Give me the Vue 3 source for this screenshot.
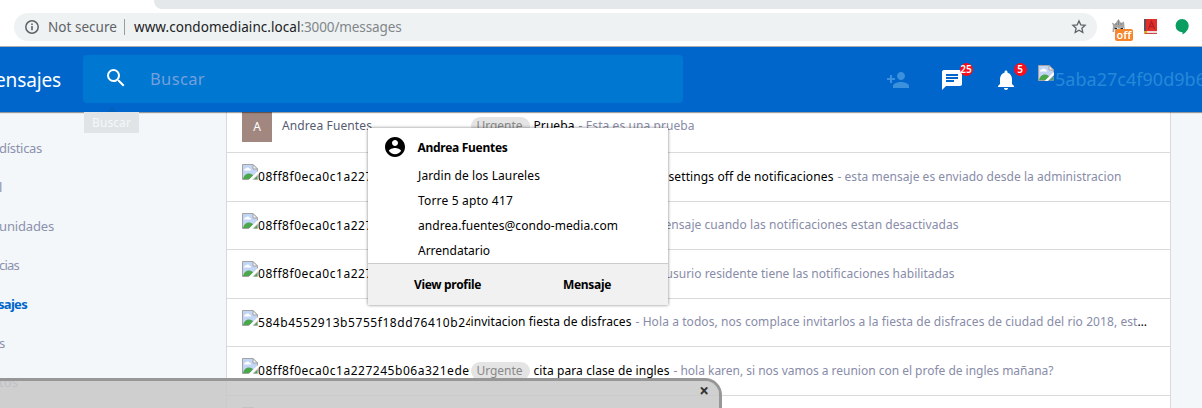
<script setup>
const messages = [
  { initial: 'A', name: 'Andrea Fuentes', urgent: true, subject: 'Prueba', sw: 41, text: '- Esta es una prueba', tw: 116 },
  { alt: '08ff8f0eca0c1a227245b06a321ede9', aw: 219, indent: 198, subject: 'settings off de notificaciones', sw: 165, text: '- esta mensaje es enviado desde la administracion', tw: 284 },
  { alt: '08ff8f0eca0c1a227245b06a321ede9', aw: 219, indent: 194, text: 'ensaje cuando las notificaciones estan desactivadas', tw: 294 },
  { alt: '08ff8f0eca0c1a227245b06a321ede9', aw: 219, indent: 195, text: 'usurio residente tiene las notificaciones habilitadas', tw: 289 },
  { alt: '584b4552913b5755f18dd76410b24', aw: 215, subject: 'invitacion fiesta de disfraces', sw: 161, text: '- Hola a todos, nos complace invitarlos a la fiesta de disfraces de ciudad del rio 2018, est', tw: 502, more: true },
  { alt: '08ff8f0eca0c1a227245b06a321ede9', aw: 219, urgent: true, subject: 'cita para clase de ingles', sw: 136, text: '- hola karen, si nos vamos a reunion con el profe de ingles mañana?', tw: 380 },
  { alt: '08ff8f0eca0c1a227245b06a321ede9', aw: 219, subject: '', text: '' },
]

const menu = [
  { label: 'dísticas', w: 43 },
  { label: 'l', w: 3 },
  { label: 'unidades', w: 55 },
  { label: 'cias', w: 20 },
  { label: 'sajes', w: 29, active: true },
  { label: 's', w: 6 },
  { label: 'tos', w: 19 },
]

const details = [
  { label: 'Jardin de los Laureles', w: 122 },
  { label: 'Torre 5 apto 417', w: 95 },
  { label: 'andrea.fuentes@condo-media.com', w: 200 },
  { label: 'Arrendatario', w: 72 },
]

// Tracks the text in or out so that it fills the given width.
const vFit = {
  mounted(el, { value }) {
    if (!value) return
    const natural = el.getBoundingClientRect().width
    el.style.letterSpacing = (value - natural) / el.textContent.length + 'px'
  },
}
</script>

<template>
  <div class="screen">
    <svg class="defs" width="0" height="0">
      <symbol id="broken" viewBox="0 0 16 16">
        <path d="M.5.5h10.500l4.500 4.500v5L10 15.500H.5z" fill="#c2d5f5" stroke="#a3a3a3" />
        <path d="M2 6.500c0-1.500 1-2 2-2 .5-1.500 3-1.500 3.300 0 1.200 0 1.700.8 1.700 2z" fill="#fff" />
        <path d="M1 15c1-4 3.500-5.500 6-5.500s3.500 1 4 2L8 15z" fill="#4ca64c" />
        <path d="M11 .5V5h4.500z" fill="#f5f5f5" stroke="#a3a3a3" />
        <path class="tear" d="M16 7v3L10 16H6.500z" />
        <path d="M15.500 11.500v4H11.500z" fill="#4ca64c" stroke="#a3a3a3" stroke-width=".6" />
      </symbol>
    </svg>

    <div class="browser">
      <div class="tabs"></div>
      <div class="toolbar">
        <div class="omnibox">
          <svg class="info" width="16" height="16" viewBox="0 0 16 16"><circle cx="8" cy="8" r="6.200" fill="none" stroke="#5f6368" stroke-width="1.500" /><path d="M7.200 7h1.600v4.200H7.200zM7.200 4.500h1.600V6H7.200z" fill="#5f6368" /></svg>
          <span class="secure"><span v-fit="69">Not secure</span></span>
          <span class="divider"></span>
          <span class="host" v-fit="166.5">www.condomediainc.local</span><span class="path" v-fit="101">:3000/messages</span>
          <svg class="star" width="16" height="16" viewBox="0 0 16 16"><path d="M8 1.900l1.800 4 4.300.4-3.200 2.900.9 4.300L8 11.300l-3.800 2.200.9-4.300-3.200-2.900 4.300-.4z" fill="none" stroke="#5f6368" stroke-width="1.300" /></svg>
        </div>
        <div class="ext cat">
          <svg width="16" height="14" viewBox="0 0 16 14"><path d="M1.500 13L2 6.500.8 3.500 4 5 7.500 0l2.500 4L13 2.500l.5 4.500.5 6z" fill="#a5a5a5" /><path d="M3 13V9l3-1 2 2 2-2 3 1v4z" fill="#e8e8e8" /><path d="M3.500 9.500h2.500M9.500 9.500H12" stroke="#222" stroke-width="1.500" /><path d="M7.500 1v5M5 4v2M10 4v2" stroke="#777" stroke-width=".7" /></svg>
          <span class="off">off</span>
        </div>
        <svg class="ext book" width="15" height="17" viewBox="0 0 15 17"><path d="M1 1h13v12H1z" fill="#df302c" /><path d="M1 1h2v15H1z" fill="#634e57" /><path d="M2 13h12v3H2z" fill="#f0ddd9" /><path d="M1 13h3v3H1z" fill="#e7a72d" /><path d="M2 15.500h12" stroke="#c94a42" /><path d="M5.500 11L8.500 3.500l3 7.500M6.500 8.500h4" fill="none" stroke="#b51f22" stroke-width="1.300" /></svg>
        <svg class="ext chat" width="14" height="16" viewBox="0 0 14 16"><path d="M7 0a6.600 6.600 0 0 1 6.700 6.700c0 3.700-3 7-6.200 8.800v-2.200A6.600 6.600 0 1 1 7 0z" fill="#0a9d60" /></svg>
      </div>
    </div>

    <header class="appbar">
      <div class="title"><span v-fit="66">ensajes</span></div>
      <div class="search">
        <svg width="24" height="24" viewBox="0 0 24 24"><path fill="#fff" d="M15.500 14h-.79l-.28-.27A6.471 6.471 0 0 0 16 9.500 6.500 6.500 0 1 0 9.500 16c1.610 0 3.090-.59 4.230-1.570l.27.28v.79l5 4.990L20.490 19l-4.990-5zm-6 0C7.010 14 5 11.990 5 9.500S7.010 5 9.500 5 14 7.010 14 9.500 11.990 14 9.500 14z" /></svg>
        <span class="placeholder"><span v-fit="55">Buscar</span></span>
      </div>
      <nav class="actions">
        <svg class="faded" width="24" height="24" viewBox="0 0 24 24"><path d="M15 12c2.210 0 4-1.790 4-4s-1.790-4-4-4-4 1.790-4 4 1.790 4 4 4zm-9-2V7H4v3H1v2h3v3h2v-3h3v-2H6zm9 4c-2.670 0-8 1.340-8 4v2h16v-2c0-2.660-5.330-4-8-4z" /></svg>
        <div class="action">
          <svg width="24" height="24" viewBox="0 0 24 24"><path d="M20 2H4c-1.100 0-1.990.9-1.990 2L2 22l4-4h14c1.100 0 2-.9 2-2V4c0-1.100-.9-2-2-2zM6 9h12v2H6V9zm8 5H6v-2h8v2zm4-6H6V6h12v2z" /></svg>
          <b class="badge">25</b>
        </div>
        <div class="action">
          <svg width="24" height="24" viewBox="0 0 24 24"><path d="M12 22c1.100 0 2-.9 2-2h-4c0 1.100.89 2 2 2zm6-6v-5c0-3.070-1.640-5.640-4.500-6.320V4c0-.83-.67-1.500-1.500-1.500s-1.500.67-1.500 1.500v.68C7.630 5.360 6 7.920 6 11v5l-2 2v1h16v-1l-2-2z" /></svg>
          <b class="badge">5</b>
        </div>
      </nav>
      <div class="user">
        <svg class="broken" width="16" height="16"><use href="#broken" /></svg>
        <span v-fit="151">5aba27c4f90d9b6</span>
      </div>
      <div class="tip"><span v-fit="39">Buscar</span></div>
    </header>

    <main class="body">
      <aside class="menu">
        <div v-for="m in menu" :key="m.label" class="item" :class="{ active: m.active }"><span v-fit="m.w">{{ m.label }}</span></div>
      </aside>
      <section class="inbox">
        <div v-for="(m, i) in messages" :key="i" class="row" :class="{ first: m.initial }">
          <div class="sender">
            <template v-if="m.initial">
              <span class="avatar">{{ m.initial }}</span>
              <span class="name" v-fit="90">{{ m.name }}</span>
            </template>
            <template v-else>
              <svg class="broken" width="16" height="16"><use href="#broken" /></svg>
              <span class="alt" v-fit="m.aw">{{ m.alt }}</span>
            </template>
          </div>
          <div class="summary" :style="{ paddingLeft: (m.indent || 0) + 'px' }">
            <span v-if="m.urgent" class="chip"><span v-fit="46">Urgente</span></span>
            <span v-if="m.subject" class="subject" v-fit="m.sw">{{ m.subject }}</span>
            <span v-if="m.text" v-fit="m.tw" class="excerpt">{{ m.text }}</span>
            <span v-if="m.more" class="more">…</span>
          </div>
        </div>
      </section>
    </main>

    <div class="card">
      <div class="who">
        <svg width="24" height="24" viewBox="0 0 24 24"><path d="M12 2C6.480 2 2 6.480 2 12s4.480 10 10 10 10-4.480 10-10S17.520 2 12 2zm0 3c1.660 0 3 1.340 3 3s-1.340 3-3 3-3-1.340-3-3 1.340-3 3-3zm0 14.200c-2.500 0-4.710-1.280-6-3.220.03-1.990 4-3.080 6-3.080 1.990 0 5.970 1.090 6 3.080-1.290 1.940-3.500 3.220-6 3.220z" /></svg>
        <b v-fit="90">Andrea Fuentes</b>
      </div>
      <div v-for="d in details" :key="d.label" class="detail"><span v-fit="d.w">{{ d.label }}</span></div>
      <div class="buttons">
        <b class="view" v-fit="67">View profile</b>
        <b v-fit="48">Mensaje</b>
      </div>
    </div>

    <div class="drawer"><b class="close">×</b></div>
  </div>
</template>

<style>
body { margin: 0; overflow: hidden; }
</style>

<style scoped>
.screen { position: relative; width: 1202px; height: 408px; overflow: hidden; display: flex; flex-direction: column; background: #f3f7fa; font: 12px/18px "Noto Sans", sans-serif; color: #000; }
span, b { white-space: pre; }
b { font-weight: 700; }
svg { flex: none; display: block; }
.defs { position: absolute; }
.tear { fill: #fff; }
.user .tear { fill: #06c; }

.browser { height: 46px; flex: none; background: #fff; border-bottom: 1px solid #adadad; }
.tabs { height: 9px; margin-left: 154px; background: #e4e8ea; border-bottom-left-radius: 8px; }
.toolbar { display: flex; align-items: flex-start; padding: 4px 0 0 14px; }
.omnibox { width: 1083px; height: 28px; flex: none; box-sizing: border-box; border-radius: 14px; background: #eef2f2; display: flex; align-items: center; padding: 0 10px; font-size: 13.5px; color: #5f6368; }
.secure { width: 76px; margin-left: 8px; }
.divider { width: 1px; height: 16px; background: #9a9da0; margin-right: 9px; }
.host { color: #202124; }
.path { color: #80868b; }
.star { margin-left: auto; }
.cat { position: relative; width: 20px; height: 28px; margin-left: 14px; padding-top: 6px; box-sizing: border-box; }
.off { position: absolute; left: 4px; top: 16px; width: 18px; height: 12px; border-radius: 2px; background: #f5862c; color: #fff; font: 600 11px/11px "Noto Sans", sans-serif; text-align: center; }
.book { margin: 5px 0 0 12px; }
.chat { margin: 6px 0 0 17px; }

.appbar { position: relative; z-index: 2; height: 65px; flex: none; background: #06c; box-shadow: 0 1px 1px rgba(0, 0, 0, .38); display: flex; align-items: flex-start; }
.title { width: 88px; margin-left: -5px; color: #fff; font-size: 19px; line-height: 66px; flex: none; }
.search { width: 600px; height: 48px; margin-top: 8px; border-radius: 4px; background: #0077d0; display: flex; flex: none; align-items: center; box-sizing: border-box; padding: 0 0 2px 21px; }
.placeholder { margin: 2px 0 0 22px; font-size: 16.5px; color: #75a0dd; }
.actions { display: flex; gap: 30px; margin: 21px 0 0 203px; fill: #fff; }
.faded { fill: #3b91dc; }
.action { position: relative; }
.badge { position: absolute; left: 19.500px; top: -5px; width: 13px; height: 13px; border-radius: 7px; background: #fc0d1b; color: #fff; font-size: 10px; font-weight: 600; line-height: 12px; text-align: center; }
.user { display: flex; margin: 18px 0 0 20px; color: #2589d8; font-size: 18px; line-height: 28px; }
.user span { margin-left: 1px; flex: none; }
.tip { position: absolute; left: 84px; top: 65px; width: 55px; height: 21px; box-sizing: border-box; padding-left: 8px; background: #e0e4e6; color: #f5f7f8; line-height: 21px; }
.tip::before { content: ""; position: absolute; left: 23px; top: -5px; border: 5px solid transparent; border-top: 0; border-bottom-color: #0062bd; }

.body { flex: 1; display: flex; min-height: 0; overflow: hidden; }
.menu { width: 226px; flex: none; padding-top: 17px; }
.item { height: 39px; margin-left: -1px; font-size: 13px; line-height: 39px; color: #8c91ad; }
.item.active { color: #06c; font-weight: 700; margin-left: -2px; }
.inbox { width: 943px; flex: none; background: #fff; border: solid #d8d9dc; border-width: 0 1px; margin-top: -7.500px; height: 400px; }
.row { height: 48.500px; box-sizing: border-box; border-bottom: 1px solid #dadada; padding-left: 15px; display: flex; }
.sender { width: 228px; flex: none; display: flex; overflow: hidden; padding-top: 11px; margin-right: 1px; box-sizing: border-box; }
.alt { padding-top: 4px; }
.summary { display: flex; padding-top: 14.500px; margin-left: -.5px; }
.subject { margin-right: 4px; }
.excerpt { color: #888ca8; }
.more { width: 12px; }
.chip { height: 18px; width: 59px; box-sizing: border-box; border-radius: 9px; background: #e4e4e4; color: #888; padding-left: 6px; margin-right: 4px; }
.first .sender { padding-top: 7.500px; }
.first .summary { padding-top: 12px; }
.avatar { width: 30px; height: 30px; line-height: 30px; text-align: center; background: #a1877f; color: #fff; }
.name { margin-left: 10px; padding-top: 4.500px; color: #565b72; }

.card { position: absolute; z-index: 3; left: 368px; top: 128px; width: 300px; height: 177px; background: #fff; box-shadow: 0 0 3px rgba(0, 0, 0, .5); display: flex; flex-direction: column; }
.who { display: flex; align-items: center; height: 24px; padding: 7px 0 4px 15px; }
.who b { margin: 2px 0 0 10.500px; }
.detail { height: 25px; line-height: 25px; padding-left: 50px; }
.buttons { margin-top: auto; height: 41px; line-height: 41px; border-top: 1px solid #ccc; background: #f1f1f1; display: flex; padding-left: 46px; }
.view { margin-right: 82px; }

.drawer { position: absolute; z-index: 4; left: -20px; top: 378px; width: 739px; height: 60px; border: 3px solid #979797; border-left: 0; border-top-right-radius: 17px; background: rgba(200, 200, 200, .86); background-clip: padding-box; }
.close { position: absolute; right: 10px; top: 1px; color: #333; font-size: 17px; }
</style>
